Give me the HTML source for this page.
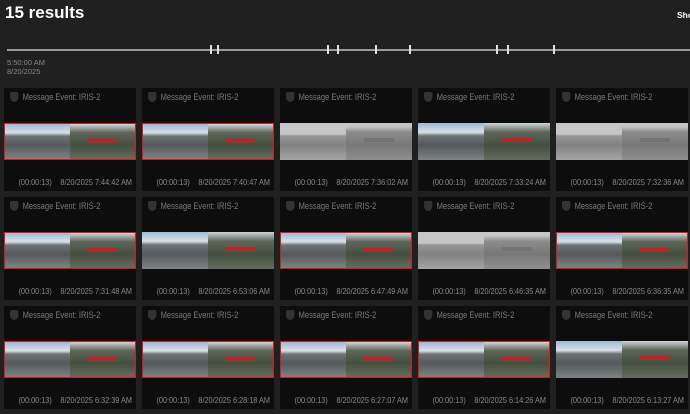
<!DOCTYPE html>
<html><head><style>
*{margin:0;padding:0;box-sizing:border-box}
body{width:690px;height:414px;background:#202020;font-family:"Liberation Sans",sans-serif;position:relative;overflow:hidden;color:#ccc}
h1{position:absolute;left:5px;top:3px;font-size:17px;font-weight:bold;color:#fff}
.sho{position:absolute;left:677px;top:10px;font-size:8.5px;font-weight:bold;color:#fff}
.tl{position:absolute;left:7px;top:49px;width:683px;height:2px;background:#9a9a9a}
.tk{position:absolute;top:45px;width:2px;height:9px;background:#e0e0e0}
.lab{position:absolute;left:7px;top:58px;font-size:7.5px;line-height:9px;color:#888}
.card{position:absolute;width:132px;height:103px;background:#0d0d0d}
.t{position:absolute;left:6px;top:4px;font-size:9px;color:#7a7a7a;white-space:nowrap;transform:scaleX(.84);transform-origin:left}
.t i{display:inline-block;width:10px;height:10px;background:#333;border-radius:2px 2px 5px 5px;vertical-align:-2px;margin-right:5px}
.img{position:absolute;left:0;top:35px;width:132px;height:37px;overflow:hidden;
background:linear-gradient(180deg,#9fb8d4 0,#d8dfe6 25%,#6d7274 35%,#55595b 60%,#7d8283 100%)}
.img:before{content:"";position:absolute;left:50%;top:0;width:50%;height:100%;background:linear-gradient(180deg,#d0d5da 0,#5d6559 25%,#44503f 60%,#646a5e 100%)}
.img:after{content:"";position:absolute;left:64%;top:15px;width:22%;height:4px;background:#b8262a}
.r{border:1.5px solid #e0161c}
.g{filter:grayscale(1) brightness(1.5) contrast(.55)}
.f{position:absolute;right:4px;top:89px;font-size:8.5px;color:#888;white-space:nowrap;transform:scaleX(.86);transform-origin:right}
.f b{font-weight:normal;margin-right:10px}
</style></head><body>
<h1>15 results</h1>
<div class="sho">Sho</div>
<div class="tl"></div>
<div class="tk" style="left:210px"></div><div class="tk" style="left:217px"></div>
<div class="tk" style="left:327px"></div><div class="tk" style="left:337px"></div>
<div class="tk" style="left:375px"></div><div class="tk" style="left:409px"></div>
<div class="tk" style="left:496px"></div><div class="tk" style="left:507px"></div>
<div class="tk" style="left:553px"></div>
<div class="lab">5:50:00 AM<br>8/20/2025</div>

<div class="card" style="left:4px;top:88px"><div class="t"><i></i>Message Event: IRIS-2</div><div class="img r"></div><div class="f"><b>(00:00:13)</b>8/20/2025 7:44:42 AM</div></div>
<div class="card" style="left:142px;top:88px"><div class="t"><i></i>Message Event: IRIS-2</div><div class="img r"></div><div class="f"><b>(00:00:13)</b>8/20/2025 7:40:47 AM</div></div>
<div class="card" style="left:280px;top:88px"><div class="t"><i></i>Message Event: IRIS-2</div><div class="img g"></div><div class="f"><b>(00:00:13)</b>8/20/2025 7:36:02 AM</div></div>
<div class="card" style="left:418px;top:88px"><div class="t"><i></i>Message Event: IRIS-2</div><div class="img"></div><div class="f"><b>(00:00:13)</b>8/20/2025 7:33:24 AM</div></div>
<div class="card" style="left:556px;top:88px"><div class="t"><i></i>Message Event: IRIS-2</div><div class="img g"></div><div class="f"><b>(00:00:13)</b>8/20/2025 7:32:36 AM</div></div>

<div class="card" style="left:4px;top:197px"><div class="t"><i></i>Message Event: IRIS-2</div><div class="img r"></div><div class="f"><b>(00:00:13)</b>8/20/2025 7:31:48 AM</div></div>
<div class="card" style="left:142px;top:197px"><div class="t"><i></i>Message Event: IRIS-2</div><div class="img"></div><div class="f"><b>(00:00:13)</b>8/20/2025 6:53:06 AM</div></div>
<div class="card" style="left:280px;top:197px"><div class="t"><i></i>Message Event: IRIS-2</div><div class="img r"></div><div class="f"><b>(00:00:13)</b>8/20/2025 6:47:49 AM</div></div>
<div class="card" style="left:418px;top:197px"><div class="t"><i></i>Message Event: IRIS-2</div><div class="img g"></div><div class="f"><b>(00:00:13)</b>8/20/2025 6:46:35 AM</div></div>
<div class="card" style="left:556px;top:197px"><div class="t"><i></i>Message Event: IRIS-2</div><div class="img r"></div><div class="f"><b>(00:00:13)</b>8/20/2025 6:36:35 AM</div></div>

<div class="card" style="left:4px;top:306px"><div class="t"><i></i>Message Event: IRIS-2</div><div class="img r"></div><div class="f"><b>(00:00:13)</b>8/20/2025 6:32:39 AM</div></div>
<div class="card" style="left:142px;top:306px"><div class="t"><i></i>Message Event: IRIS-2</div><div class="img r"></div><div class="f"><b>(00:00:13)</b>8/20/2025 6:28:18 AM</div></div>
<div class="card" style="left:280px;top:306px"><div class="t"><i></i>Message Event: IRIS-2</div><div class="img r"></div><div class="f"><b>(00:00:13)</b>8/20/2025 6:27:07 AM</div></div>
<div class="card" style="left:418px;top:306px"><div class="t"><i></i>Message Event: IRIS-2</div><div class="img r"></div><div class="f"><b>(00:00:13)</b>8/20/2025 6:14:26 AM</div></div>
<div class="card" style="left:556px;top:306px"><div class="t"><i></i>Message Event: IRIS-2</div><div class="img"></div><div class="f"><b>(00:00:13)</b>8/20/2025 6:13:27 AM</div></div>
</body></html>
